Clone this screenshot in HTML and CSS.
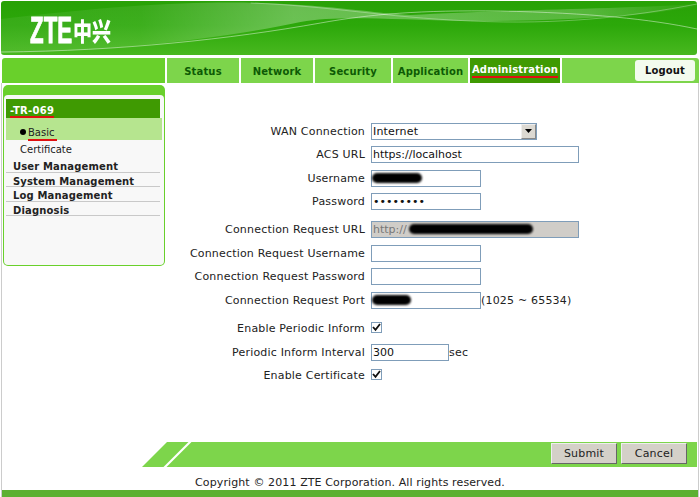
FILE: index.html
```html
<!DOCTYPE html>
<html lang="en">
<head>
<meta charset="utf-8">
<title>ZTE</title>
<link rel="stylesheet" href="styles.css">
</head>
<body>
<div class="page">
  <header class="banner">
    <svg class="wave" viewBox="0 0 697 54" preserveAspectRatio="none" aria-hidden="true">
      <defs>
        <linearGradient id="sheen" x1="0" x2="1" y1="0" y2="0">
          <stop offset="0" stop-color="#fff" stop-opacity=".06"/>
          <stop offset=".2" stop-color="#fff" stop-opacity=".08"/>
          <stop offset=".42" stop-color="#fff" stop-opacity=".3"/>
          <stop offset=".6" stop-color="#fff" stop-opacity=".28"/>
          <stop offset=".85" stop-color="#fff" stop-opacity=".2"/>
          <stop offset="1" stop-color="#fff" stop-opacity=".02"/>
        </linearGradient>
      </defs>
      <path d="M0 18C110 5 190 0 260 2C340 5 370 12 410 14C500 9 620 8 697 3L697 5C640 16 560 20 470 20C390 19 340 14 300 21C220 38 110 50 0 52Z" fill="url(#sheen)"/>
      <path d="M0 51C120 50 230 38 320 22C370 13 420 9 500 10C590 12 650 18 697 28" fill="none" stroke="#fff" stroke-opacity=".45" stroke-width="1"/>
      <path d="M250 2C330 5 380 16 470 20C560 24 630 16 697 3" fill="none" stroke="#fff" stroke-opacity=".3" stroke-width="1"/>
    </svg>
    <div class="logo"><span class="logo-latin">ZTE</span><span class="logo-cjk">中兴</span></div>
  </header>

  <nav class="nav">
    <div class="nav-spacer"></div>
    <a class="tab tab-status">Status</a>
    <a class="tab tab-network">Network</a>
    <a class="tab tab-security">Security</a>
    <a class="tab tab-application">Application</a>
    <a class="tab tab-admin"><span class="marked">Administration</span></a>
    <div class="nav-end"><a class="logout">Logout</a></div>
  </nav>

  <div class="content">
    <div class="body">
      <aside class="side">
        <div class="side-inner">
          <div class="side-title"><span class="marked">-TR-069</span></div>
          <div class="side-sel"><span class="dot"></span><span class="marked-thin">Basic</span></div>
          <div class="side-sub">Certificate</div>
          <div class="side-item">User Management</div>
          <div class="side-item">System Management</div>
          <div class="side-item">Log Management</div>
          <div class="side-item">Diagnosis</div>
        </div>
      </aside>

      <main class="form">
        <div class="row"><label>WAN Connection</label>
          <div class="fake-select">Internet<span class="sel-btn"><svg width="7" height="4" viewBox="0 0 7 4"><path d="M0 0H7L3.5 4Z" fill="#000"/></svg></span></div></div>
        <div class="row"><label>ACS URL</label><input class="wide" value="https://localhost"></div>
        <div class="row"><label>Username</label><div class="blurred"><input class="mid"><span class="blob blob-user"></span></div></div>
        <div class="row"><label>Password</label><input class="mid" type="password" value="12345678"></div>
        <div class="row group"><label>Connection Request URL</label><div class="blurred"><input class="wide off" value="http://" disabled><span class="blob blob-url"></span></div></div>
        <div class="row"><label>Connection Request Username</label><input class="mid"></div>
        <div class="row"><label>Connection Request Password</label><input class="mid"></div>
        <div class="row"><label>Connection Request Port</label><div class="blurred"><input class="mid"><span class="blob blob-port"></span></div><span class="after">(1025 ~ 65534)</span></div>
        <div class="row group"><label>Enable Periodic Inform</label><span class="check"><svg width="9" height="9" viewBox="0 0 9 9"><path d="M1 4L3.5 6.8L8 1" fill="none" stroke="#111" stroke-width="1.8"/></svg></span></div>
        <div class="row"><label>Periodic Inform Interval</label><input class="short" value="300"><span class="after">sec</span></div>
        <div class="row"><label>Enable Certificate</label><span class="check"><svg width="9" height="9" viewBox="0 0 9 9"><path d="M1 4L3.5 6.8L8 1" fill="none" stroke="#111" stroke-width="1.8"/></svg></span></div>
      </main>
    </div>

    <div class="actions">
      <button class="btn" type="button">Submit</button>
      <button class="btn" type="button">Cancel</button>
    </div>
    <footer class="copy">Copyright © 2011 ZTE Corporation. All rights reserved.</footer>
    <div class="bottom"></div>
  </div>
</div>
</body>
</html>
```
FILE: styles.css
```css
* { box-sizing: border-box; }
html, body { margin: 0; padding: 0; background: #fff; }
body { font-family: "DejaVu Sans", Verdana, sans-serif; font-size: 11px; color: #222; }
.page { width: 700px; height: 497px; overflow: hidden; display: flex; flex-direction: column; }

.banner { position: relative; height: 54px; margin: 1px 3px 0 1px; border-radius: 3px; overflow: hidden; flex: none;
  background: linear-gradient(#28a106 0, #2ca80a 45%, #48b81f 100%); }
.wave { position: absolute; inset: 0; width: 100%; height: 100%; }
.logo { position: absolute; left: 29px; top: 16px; color: #fff; display: flex; align-items: center; height: 28px; }
.logo-latin { font: bold 36px/28px "Liberation Sans", sans-serif; display: inline-block; width: 43px; transform: scaleX(.62); transform-origin: 0 50%; white-space: nowrap; -webkit-text-stroke: .9px #fff; }
.logo-cjk { font: 900 19px/28px "Noto Sans CJK SC", sans-serif; white-space: nowrap; display: inline-block; transform: scaleY(1.3); }

.nav { display: flex; height: 25px; margin: 3px 1px 0 2px; gap: 2px; font-weight: bold; font-size: 10px; letter-spacing: .15px; color: #0d5a05; flex: none; }
.nav-spacer { width: 163px; background: #69d02b; border-radius: 3px 0 0 0; }
.tab { display: flex; align-items: center; justify-content: center; background: #7dd54b; padding-top: 1px; }
.tab-status { width: 72px; }
.tab-network { width: 72px; }
.tab-security { width: 76px; }
.tab-application { width: 75px; }
.tab-admin { width: 90px; background: #3f9a02; color: #fff; }
.marked { border-bottom: 2px solid #e01010; line-height: 12px; display: inline-block; }
.nav-end { flex: 1; background: #7dd54b; border-radius: 0 3px 0 0; display: flex; justify-content: flex-end; align-items: flex-start; padding: 2px 4px 0 0; }
.logout { width: 60px; height: 21px; background: #f3fbee; border-radius: 3px; color: #111; display: flex; align-items: center; justify-content: center; }

.content { flex: 1; margin-left: 1px; width: 698px; border-left: 1px solid #ccc; border-right: 1px solid #ccc; display: flex; flex-direction: column; }
.body { display: flex; height: 359px; flex: none; }
.side { width: 162px; height: 181px; margin: 2px 0 0 1px; padding: 10px 1px 1px 1px; background: #69d02b; border-radius: 5px; flex: none; }
.side-inner { height: 100%; background: #f8f8f8; border-radius: 4px; padding: 4px 2px 0 2px; font-size: 10px; }
.side-title { height: 19px; width: 154px; background: #3f9a02; color: #fff; font-weight: bold; padding: 6px 0 0 4px; letter-spacing: .3px; }
.side-title .marked { line-height: 10px; }
.side-sel { height: 22px; background: #b6e58f; display: flex; align-items: flex-start; padding: 9px 0 0 14px; color: #222; }
.dot { width: 6px; height: 6px; border-radius: 50%; background: #000; margin: 2px 2px 0 0; }
.marked-thin { border-bottom: 2px solid #e01010; line-height: 12px; padding: 0 3px 0 0; }
.side-sub { height: 18px; padding: 4px 0 0 14px; }
.side-item { height: 14.5px; width: 154px; font-weight: bold; letter-spacing: .15px; padding: 3px 0 0 7px; border-bottom: 1px solid #c9c9c9; line-height: 11px; }

.form { flex: 1; display: flex; flex-direction: column; padding-top: 36.4px; }
.row { display: flex; align-items: center; height: 23.5px; color: #222; letter-spacing: .19px; }
.row.group { margin-top: 4.8px; }
.row label { width: 200px; text-align: right; margin-right: 6px; flex: none; }
input, .fake-select { font: 11px "DejaVu Sans", Verdana, sans-serif; color: #111; height: 17px; border: 1px solid #7f9db9; padding: 0 1px; background: #fff; outline: 0; }
.wide { width: 208px; }
.mid { width: 110px; }
.short { width: 78px; }
.off { background: #d0cdc8; color: #777; }
.fake-select { width: 166px; position: relative; display: flex; align-items: center; }
.sel-btn { position: absolute; right: 0; top: 0; width: 15px; height: 15px; background: #dcd9d2; border: 1px solid #888; border-top-color: #eee; border-left-color: #eee; display: flex; align-items: center; justify-content: center; }
.blurred { position: relative; display: flex; }
.blob { position: absolute; background: #000; border-radius: 6px; filter: blur(1px); height: 10px; top: 3px; left: 1px; }
.blob-user { width: 50px; }
.blob-url { width: 124px; left: 38px; top: 3px; height: 10px; }
.blob-port { width: 39px; }
.after { margin-left: 0; }
.check { width: 11px; height: 11px; border: 1px solid #7f9db9; background: #fff; display: flex; align-items: center; justify-content: center; margin-top: -2px; }

.actions { height: 25px; margin: 0 1px 0 140px; background: #7dd54b; display: flex; justify-content: flex-end; align-items: center; gap: 4px; padding-right: 10px;
  clip-path: polygon(25px 0, 100% 0, 100% 100%, 0 100%); position: relative; flex: none; }
.actions::before { content: ""; position: absolute; left: 34px; top: 0; width: 3px; height: 25px; background: #fff; transform: skewX(-45deg); }
.btn { width: 66px; height: 21px; margin-top: -2px; font: 11px "DejaVu Sans", Verdana, sans-serif; letter-spacing: .2px; color: #222; background: #d4d0c8; border: 1px solid; border-color: #eee #666 #666 #eee; padding: 0; }
.copy { height: 23px; text-align: center; padding-top: 9px; line-height: 13px; letter-spacing: .11px; flex: none; }
.bottom { height: 7px; background: #5cb030; flex: none; }
```
